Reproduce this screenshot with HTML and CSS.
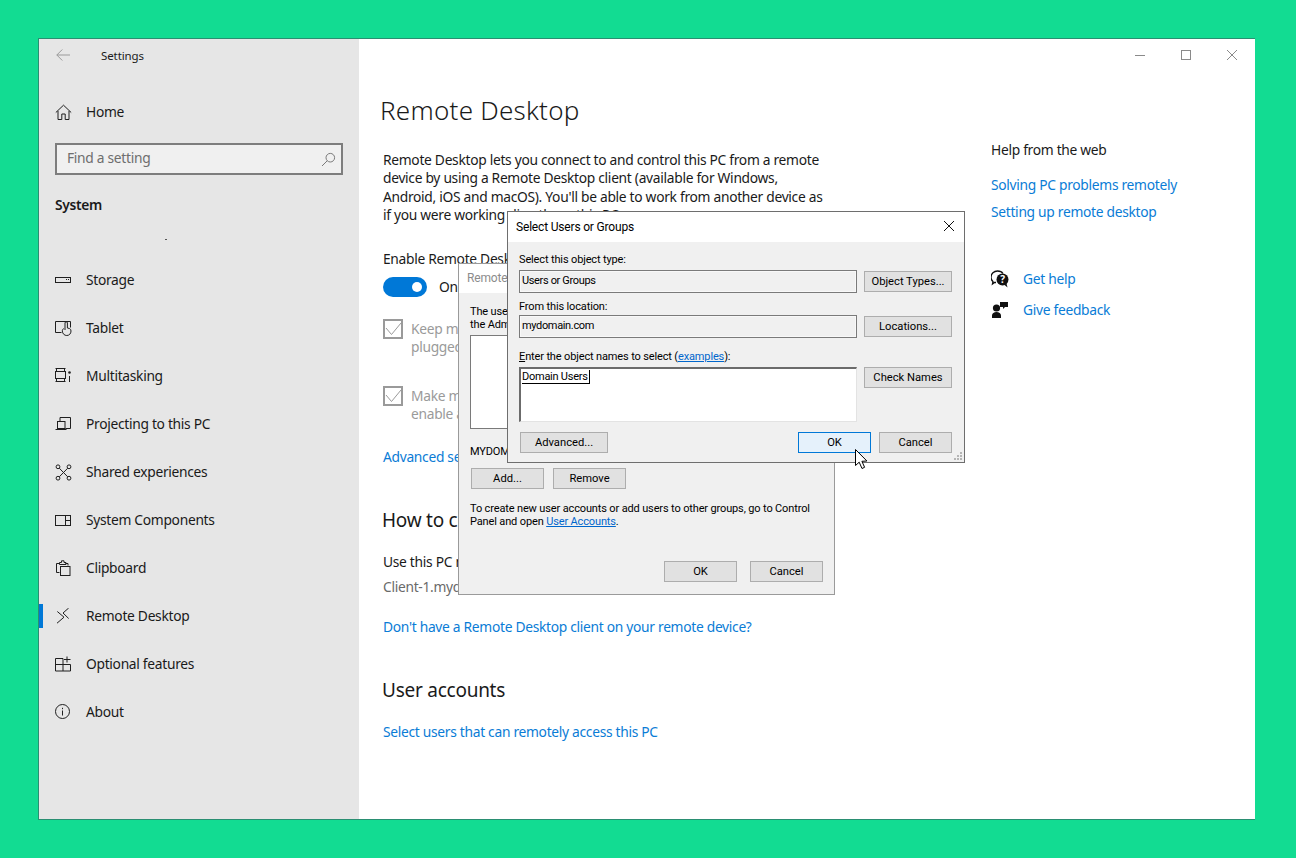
FILE: index.html
```html
<!DOCTYPE html>
<html lang="en">
<head>
<meta charset="utf-8">
<title>Settings - Remote Desktop</title>
<link rel="stylesheet" href="styles.css">
</head>
<body>
<div class="window">
  <aside class="sidebar">
    <div class="side-title">
      <svg class="back" width="16" height="14" viewBox="0 0 16 14"><path d="M14 7H.8M6.300 1.500.8 7l5.500 5.500"/></svg>
      <span>Settings</span>
    </div>
    <a class="nav home">
      <svg class="ico" width="17" height="17" viewBox="0 0 17 17"><path d="M.8 8.500 8.500 1.200l7.700 7.300M3 7v8.500h3.800V10h3.400v5.500H14V7"/></svg>
      <span>Home</span>
    </a>
    <div class="search">
      <span>Find a setting</span>
      <svg width="15" height="15" viewBox="0 0 15 15"><circle cx="9.300" cy="5.700" r="4.300"/><path d="M6.200 8.800 1 14"/></svg>
    </div>
    <div class="group">System</div>
    <div class="speck"></div>
    <nav class="nav-list">
      <a class="nav">
        <svg class="ico" width="17" height="17" viewBox="0 0 17 17"><rect x=".5" y="5.500" width="15" height="5"/><path d="M11 7.500h1M13 7.500h1"/></svg>
        <span>Storage</span>
      </a>
      <a class="nav">
        <svg class="ico" width="17" height="17" viewBox="0 0 17 17"><path d="M6.500 12.500H.5v-11h15v6"/><path d="M10 10V3a1.200 1.200 0 0 1 2.400 0v5l2 .5a2.500 2.500 0 0 1 1.600 2.500c0 2.700-1.800 4.500-4.200 4.500-2.500 0-4.300-1.800-4.500-4.500 0-1 .5-2 1.500-2.500"/></svg>
        <span>Tablet</span>
      </a>
      <a class="nav">
        <svg class="ico" width="17" height="17" viewBox="0 0 17 17"><path d="M.5.500h10M.5 13.500h10M1.500.500v3M9.500.500v3M1.500 10.500v3M9.500 10.500v3"/><rect x=".5" y="3.500" width="10" height="7"/><path d="M14.500 8v6"/><circle cx="14.500" cy="4.500" r="1.300" class="solid"/></svg>
        <span>Multitasking</span>
      </a>
      <a class="nav">
        <svg class="ico" width="17" height="17" viewBox="0 0 17 17"><path d="M5 5.500V1.500h10.500v11h-5"/><rect x="2.500" y="5.500" width="7.500" height="7"/><path d="M.5 13.500h11"/></svg>
        <span>Projecting to this PC</span>
      </a>
      <a class="nav">
        <svg class="ico" width="17" height="17" viewBox="0 0 17 17"><circle cx="3" cy="2.800" r="1.900"/><circle cx="14" cy="2.800" r="1.900"/><circle cx="3" cy="14.200" r="1.900"/><circle cx="14" cy="14.200" r="1.900"/><path d="M4.300 4.200 12.700 12.800M12.700 4.200 4.300 12.800"/></svg>
        <span>Shared experiences</span>
      </a>
      <a class="nav">
        <svg class="ico" width="17" height="17" viewBox="0 0 17 17"><rect x=".5" y="3.500" width="15" height="10"/><path d="M10.500 3.500v10M10.500 8.500h5"/></svg>
        <span>System Components</span>
      </a>
      <a class="nav">
        <svg class="ico" width="17" height="17" viewBox="0 0 17 17"><path d="M4.500 12.500H1.500V3.500h3M10.500 3.500h2.500v2"/><path d="M4.500 4.500V2.500h2V.8h2.500v1.700h2v2z"/><rect x="5.500" y="6.500" width="9.500" height="9"/></svg>
        <span>Clipboard</span>
      </a>
      <a class="nav current">
        <svg class="ico" width="17" height="17" viewBox="0 0 17 17"><path d="M2.300 3.500 9 9.200l-7 6M13.700 0 8 5l5.700 5.500"/></svg>
        <span>Remote Desktop</span>
      </a>
      <a class="nav">
        <svg class="ico" width="17" height="17" viewBox="0 0 17 17"><path d="M.5 2.500h7.500v12.500H.5zM.5 8.500h15V15H8M12 .5v6M9 3.500h6.500"/></svg>
        <span>Optional features</span>
      </a>
      <a class="nav">
        <svg class="ico" width="17" height="17" viewBox="0 0 17 17"><circle cx="7.500" cy="7.500" r="7"/><path d="M7.500 6.500v5M7.500 3.800v1.400"/></svg>
        <span>About</span>
      </a>
    </nav>
  </aside>

  <main class="main">
    <div class="controls">
      <span class="ctl"><svg width="12" height="12" viewBox="0 0 12 12"><path d="M1 6.500h10"/></svg></span>
      <span class="ctl"><svg width="12" height="12" viewBox="0 0 12 12"><rect x="1.500" y="1.500" width="9" height="9"/></svg></span>
      <span class="ctl"><svg width="12" height="12" viewBox="0 0 12 12"><path d="M1 1l10 10M11 1 1 11"/></svg></span>
    </div>
    <div class="columns">
      <section class="content">
        <h1>Remote Desktop</h1>
        <p class="intro">Remote Desktop lets you connect to and control this PC from a remote<br>device by using a Remote Desktop client (available for Windows,<br>Android, iOS and macOS). You'll be able to work from another device as<br>if you were working directly on this PC.</p>
        <div class="enable">Enable Remote Desktop</div>
        <div class="toggle-row"><span class="toggle"></span><span>On</span></div>
        <div class="check first">
          <svg width="20" height="20" viewBox="0 0 20 20"><rect x="1" y="1" width="18" height="18"/><path d="M3 9l5.500 6.500L18 4"/></svg>
          <span>Keep my PC awake for connections when it is<br>plugged in</span>
        </div>
        <div class="check second">
          <svg width="20" height="20" viewBox="0 0 20 20"><rect x="1" y="1" width="18" height="18"/><path d="M3 9l5.500 6.500L18 4"/></svg>
          <span>Make my PC discoverable on private networks to<br>enable automatic connection</span>
        </div>
        <a class="link advanced">Advanced settings</a>
        <h2 class="how">How to connect to this PC</h2>
        <p class="use">Use this PC name to connect from your remote device:</p>
        <p class="pcname">Client-1.mydomain.com</p>
        <a class="link nodesk">Don't have a Remote Desktop client on your remote device?</a>
        <h2 class="accounts">User accounts</h2>
        <a class="link select">Select users that can remotely access this PC</a>
      </section>
      <section class="help">
        <div class="help-title">Help from the web</div>
        <a class="link solving">Solving PC problems remotely</a>
        <a class="link setting">Setting up remote desktop</a>
        <div class="help-row gethelp">
          <svg width="18" height="18" viewBox="0 0 18 18"><path class="thin" d="M5 12.500H3.500L1.500 14l.5-2.500C.5 10.500 0 9 0 7.300 0 3.500 3 1 6.500 1c2.500 0 4.500 1 5.500 2.500"/><circle class="solid" cx="11.500" cy="9.500" r="6"/><path class="solid" d="M13 14.500l3.500 3-1-4z"/><text x="11.500" y="13" class="qm">?</text></svg>
          <a class="link">Get help</a>
        </div>
        <div class="help-row">
          <svg width="18" height="18" viewBox="0 0 18 18"><circle class="solid" cx="5.500" cy="7" r="3.600"/><path class="solid" d="M1 17v-2.500C1 12.500 3 11 5.500 11S10 12.500 10 14.500V17zM9 1h8v5h-3l-2 2V6H9z"/></svg>
          <a class="link">Give feedback</a>
        </div>
      </section>
    </div>
  </main>

  <div class="dialog back-dialog">
    <div class="dlg-title faded"><span>Remote Desktop Users</span></div>
    <div class="back-body">
      <p class="back-text">The users listed below can connect to this computer, and any members of<br>the Administrators group can connect even if they are not listed.</p>
      <div class="listbox"></div>
      <p class="already">MYDOMAIN\administrator already has access.</p>
      <div class="btn-row">
        <button class="btn wide">Add...</button>
        <button class="btn wide">Remove</button>
      </div>
      <p class="create">To create new user accounts or add users to other groups, go to Control<br>Panel and open <a class="dlg-link">User Accounts</a>.</p>
      <div class="btn-row end">
        <button class="btn wide">OK</button>
        <button class="btn wide">Cancel</button>
      </div>
    </div>
  </div>

  <div class="dialog front-dialog">
    <div class="dlg-title">
      <span>Select Users or Groups</span>
      <svg width="12" height="12" viewBox="0 0 12 12"><path d="M1 1l10 10M11 1 1 11"/></svg>
    </div>
    <div class="front-body">
      <label class="lbl lbl1">Select this object type:</label>
      <div class="field">Users or Groups</div>
      <button class="btn side">Object Types...</button>
      <label class="lbl lbl2">From this location:</label>
      <div class="field">mydomain.com</div>
      <button class="btn side">Locations...</button>
      <label class="lbl lbl3"><u>E</u>nter the object names to select (<a class="dlg-link">examples</a>):</label>
      <div class="names"><span class="typed">Domain Users</span></div>
      <button class="btn side top">Check Names</button>
      <div class="front-foot">
        <button class="btn side">Advanced...</button>
        <span class="foot-right">
          <button class="btn wide primary">OK</button>
          <button class="btn wide">Cancel</button>
        </span>
      </div>
    </div>
    <svg class="grip" width="9" height="9" viewBox="0 0 9 9"><path d="M6 0h2v2H6zM3 3h2v2H3zM6 3h2v2H6zM0 6h2v2H0zM3 6h2v2H3zM6 6h2v2H6z"/></svg>
  </div>

  <svg class="cursor" width="14" height="22" viewBox="0 0 14 22"><path d="M.5.5v16l3.700-3.300 2.800 6.300 2.600-1.200-2.700-6 5-.3z"/></svg>
</div>
</body>
</html>
```

FILE: styles.css
```css
* { box-sizing: border-box; }
html, body { margin: 0; height: 100%; }
body {
  background: #12dc92;
  padding: 38px 41px 38px 38px;
  font-family: "Noto Sans", "Open Sans", sans-serif;
  font-size: 13.800px;
  letter-spacing: -0.3px;
  color: #1a1a1a;
  overflow: hidden;
}
.window {
  position: relative;
  display: flex;
  height: 782px;
  border: 1px solid #2a8f72;
  border-width: 1px 0 1px 1px;
  background: #fff;
}
a { text-decoration: none; }
p, h1, h2 { margin: 0; font-weight: 400; }

/* sidebar */
.sidebar { width: 320px; flex: none; background: #e6e6e6; display: flex; flex-direction: column; }
.side-title { height: 32px; display: flex; align-items: center; padding-left: 17px; font-size: 11.500px; letter-spacing: -0.1px; gap: 29px; }
.back { fill: none; stroke: #9a9a9a; stroke-width: 1; }
.nav { display: flex; align-items: center; height: 48px; padding-left: 16px; gap: 14px; position: relative; color: #1a1a1a; }
.nav span { margin-bottom: 2px; }
.home { margin-top: 17px; }
.ico { flex: none; fill: none; stroke: #1f1f1f; stroke-width: 1; }
.ico .solid { fill: #1f1f1f; stroke: none; }
.search {
  margin: 7px 16px 0;
  height: 32px;
  border: 2px solid #7d7d7d;
  background: #f0f0f0;
  color: #6e6e6e;
  display: flex;
  align-items: center;
  justify-content: space-between;
  padding: 0 5px 0 10px;
}
.search span { margin-bottom: 4px; }
.search svg { fill: none; stroke: #7a7a7a; stroke-width: 1; }
.group { margin: 20px 0 0 16px; height: 20px; line-height: 20px; font-weight: 600; }
.speck { width: 2px; height: 1px; background: #555; margin: 24px 0 0 126px; }
.nav-list { margin-top: 16px; display: flex; flex-direction: column; }
.current::before { content: ""; position: absolute; left: 0; top: 12px; width: 4px; height: 24px; background: #0078d7; }

/* main */
.main { flex: 1; display: flex; flex-direction: column; min-width: 0; }
.controls { height: 32px; display: flex; justify-content: flex-end; }
.ctl { width: 46px; display: flex; align-items: center; justify-content: center; }
.ctl svg { fill: none; stroke: #8a8a8a; stroke-width: 1; }
.columns { display: flex; flex: 1; }
.content { width: 632px; padding-left: 24px; display: flex; flex-direction: column; align-items: flex-start; }
h1 { font-size: 26px; font-weight: 300; letter-spacing: 0.25px; line-height: 36px; margin: 21px 0 1px -3px; }
.intro { margin-top: 22px; line-height: 18.400px; white-space: nowrap; }
.enable { margin-top: 24px; line-height: 19px; }
.toggle-row { display: flex; align-items: center; gap: 12px; margin-top: 9px; height: 20px; }
.toggle { width: 44px; height: 20px; border-radius: 10px; background: #0078d7; position: relative; display: block; }
.toggle::after { content: ""; position: absolute; right: 5px; top: 5px; width: 10px; height: 10px; border-radius: 50%; background: #fff; }
.check { display: flex; gap: 8px; color: #9a9a9a; line-height: 18px; white-space: nowrap; }
.check svg { flex: none; fill: none; stroke: #9a9a9a; }
.check rect { stroke-width: 2; }
.check path { stroke-width: 1; }
.check.first { margin-top: 22px; }
.check.second { margin-top: 31px; }
.check span { position: relative; top: 1px; }
.link { color: #0a7cd6; display: block; white-space: nowrap; }
.advanced { margin-top: 25px; line-height: 19px; }
h2 { font-size: 19px; font-weight: 400; letter-spacing: -0.25px; line-height: 26px; margin-left: -1px; }
.how { margin-top: 41px; }
.use { margin-top: 19px; line-height: 19px; }
.pcname { margin-top: 6px; line-height: 19px; color: #6a6a6a; }
.nodesk { margin-top: 21px; line-height: 19px; }
.accounts { margin-top: 41px; }
.select { margin-top: 19px; line-height: 19px; }

/* help */
.help { padding-top: 69px; }
.help-title { line-height: 20px; }
.help .link { line-height: 20px; }
.solving { margin-top: 15px; }
.setting { margin-top: 7px; }
.help-row { display: flex; align-items: center; gap: 14px; height: 20px; margin-top: 11px; }
.help-row.gethelp { margin-top: 47px; }
.help-row svg { flex: none; }
.help-row .solid { fill: #111; }
.help-row .thin { fill: none; stroke: #111; stroke-width: 1.300; }
.qm { fill: #fff; font: 700 10px "Noto Sans", sans-serif; text-anchor: middle; }

/* dialogs */
.dialog { position: absolute; background: #f0f0f0; color: #000; font-family: Roboto, "Liberation Sans", sans-serif; font-size: 11px; letter-spacing: -0.14px; }
.back-dialog { left: 419px; top: 224px; width: 377px; height: 332px; border: 1px solid #9a9a9a; }
.front-dialog { left: 468px; top: 172px; width: 458px; height: 252px; border: 1px solid #6e6e6e; }
.dlg-title { height: 30px; background: #fff; display: flex; align-items: center; justify-content: space-between; padding: 0 9px 0 8px; font-size: 12px; letter-spacing: -0.18px; }
.dlg-title span { margin-bottom: 1px; }
.dlg-title svg { fill: none; stroke: #111; stroke-width: 1; margin-bottom: 2px; }
.faded { color: #8c8c8c; height: 29px; }
.back-body { padding: 12px 11px 0; display: flex; flex-direction: column; line-height: 13px; }
.back-text { white-space: nowrap; }
.listbox { height: 94px; margin-top: 4px; background: #fff; border: 1px solid #7a7a7a; }
.already { margin-top: 16px; white-space: nowrap; }
.btn-row { display: flex; gap: 9px; margin-top: 10px; padding-left: 1px; }
.btn-row.end { justify-content: flex-end; gap: 13px; margin-top: 33px; padding-left: 0; }
.create { margin-top: 13px; white-space: nowrap; }
.btn {
  height: 21px;
  padding: 0;
  font-family: inherit;
  font-size: 11.200px;
  letter-spacing: 0;
  color: #000;
  background: #e1e1e1;
  border: 1px solid #adadad;
  line-height: 18px;
}
.btn.wide { width: 73px; }
.btn.side { width: 88px; justify-self: end; }
.btn.primary { background: #e5f1fb; border-color: #0078d7; }
.dlg-link { color: #0066cc; text-decoration: underline; }
.front-body {
  display: grid;
  grid-template-columns: 338px 88px;
  column-gap: 7px;
  grid-template-rows: 18px 23px 22px 23px 29px 55px auto;
  padding: 10px 11px 0;
  align-items: center;
}
.lbl { grid-column: 1 / -1; line-height: 13px; align-self: end; padding-bottom: 4px; }
.lbl2 { padding-bottom: 2px; }
.field { height: 23px; border: 1px solid #7a7a7a; background: #f0f0f0; padding-left: 2px; line-height: 19px; letter-spacing: -0.35px; box-shadow: inset 0 0 0 1px #f8f8f8; }
.names { height: 55px; background: #fff; border: 1px solid #e3e3e3; border-top: 2px solid #6b6b6b; border-left: 2px solid #6b6b6b; padding-left: 1px; padding-top: 1px; line-height: 13px; letter-spacing: -0.25px; }
.typed { display: inline-block; border-right: 1px solid #000; border-bottom: 1px solid #000; padding-right: 1px; }
.btn.top { align-self: start; }
.front-foot { grid-column: 1 / -1; display: flex; justify-content: space-between; margin-top: 10px; padding-left: 1px; }
.foot-right { display: flex; gap: 8px; }
.grip { position: absolute; right: 1px; bottom: 1px; fill: #b5b5b5; }
.cursor { position: absolute; left: 816px; top: 410px; fill: #fff; stroke: #000; stroke-width: 1; }
```
